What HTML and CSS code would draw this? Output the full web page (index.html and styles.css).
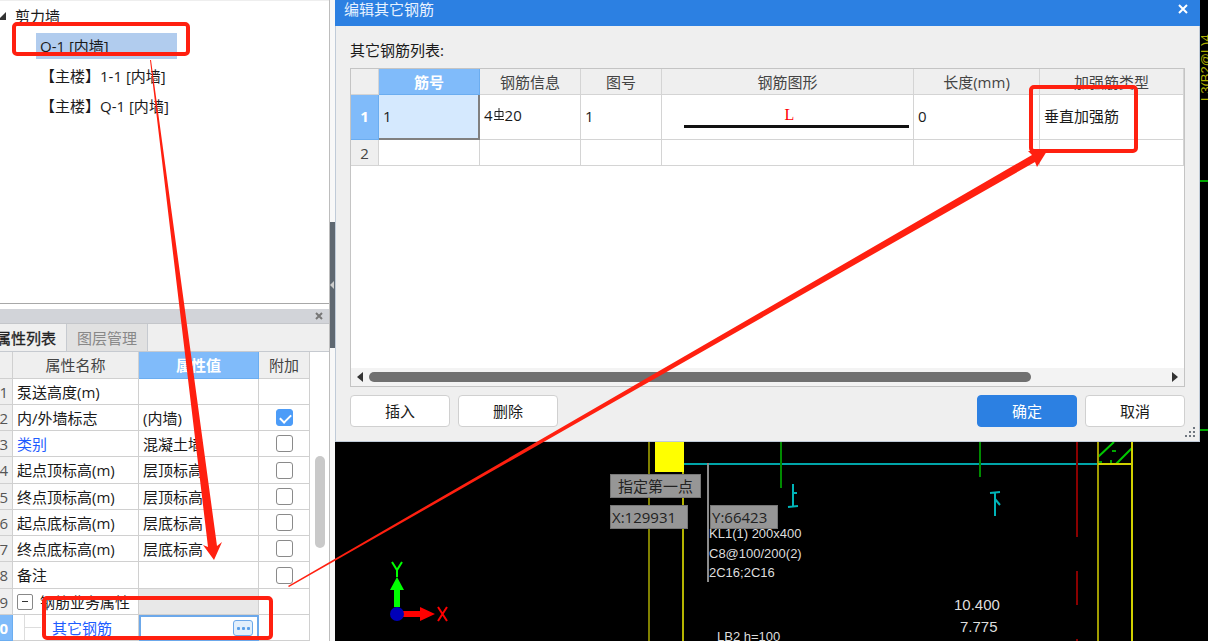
FILE: index.html
```html
<!DOCTYPE html>
<html lang="zh-CN">
<head>
<meta charset="utf-8">
<title>编辑其它钢筋</title>
<link rel="stylesheet" href="styles.css">
</head>
<body>
<div class="app">
  <aside class="side">
    <nav class="tree">
      <div class="tree-root"><svg class="caret" viewBox="0 0 6 8"><path d="M6 0V8H0V6Z"/></svg>剪力墙</div>
      <a class="tree-item selected" href="#q1">Q-1 [内墙]</a>
      <a class="tree-item" href="#z11">【主楼】1-1 [内墙]</a>
      <a class="tree-item" href="#zq1">【主楼】Q-1 [内墙]</a>
    </nav>
    <section class="props">
      <div class="props-bar"><button class="props-close" aria-label="关闭"><svg viewBox="0 0 8 8"><path d="M1 1L7 7M7 1L1 7"/></svg></button></div>
      <div class="tabs"><button class="tab active">属性列表</button><button class="tab">图层管理</button></div>
      <div class="props-body">
        <table class="props-table">
          <colgroup><col class="c-num"><col class="c-name"><col class="c-value"><col class="c-extra"></colgroup>
          <thead><tr><th></th><th>属性名称</th><th class="hot">属性值</th><th>附加</th></tr></thead>
          <tbody>
            <tr><th>1</th><td>泵送高度(m)</td><td></td><td></td></tr>
            <tr><th>2</th><td>内/外墙标志</td><td>(内墙)</td><td class="mid"><input type="checkbox" aria-label="内/外墙标志" checked></td></tr>
            <tr><th>3</th><td class="blue">类别</td><td>混凝土墙</td><td class="mid"><input type="checkbox" aria-label="类别"></td></tr>
            <tr><th>4</th><td>起点顶标高(m)</td><td>层顶标高</td><td class="mid"><input type="checkbox" aria-label="起点顶标高"></td></tr>
            <tr><th>5</th><td>终点顶标高(m)</td><td>层顶标高</td><td class="mid"><input type="checkbox" aria-label="终点顶标高"></td></tr>
            <tr><th>6</th><td>起点底标高(m)</td><td>层底标高</td><td class="mid"><input type="checkbox" aria-label="起点底标高"></td></tr>
            <tr><th>7</th><td>终点底标高(m)</td><td>层底标高</td><td class="mid"><input type="checkbox" aria-label="终点底标高"></td></tr>
            <tr><th>8</th><td>备注</td><td></td><td class="mid"><input type="checkbox" aria-label="备注"></td></tr>
            <tr><th>9</th><td><div class="group"><button class="fold" aria-label="折叠"></button>钢筋业务属性</div></td><td class="grey"></td><td></td></tr>
            <tr><th class="hot">10</th><td class="blue"><div class="child"><svg class="branch" viewBox="0 0 24 25"><path d="M7.500 0V25M7.500 12.500H24"/></svg>其它钢筋</div></td><td class="editing"><button class="more" aria-label="编辑其它钢筋"><i></i><i></i><i></i></button></td><td></td></tr>
          </tbody>
        </table>
        <div class="vscroll"><div class="vthumb"></div></div>
      </div>
    </section>
  </aside>
  <div class="splitter"><div class="handle"><svg viewBox="0 0 5 8"><path d="M4 0V8L0 4Z"/></svg></div></div>
  <main class="canvas">
    <svg class="drawing" viewBox="335 0 873 641" preserveAspectRatio="xMinYMin slice">
      <g fill="none" stroke-width="2">
        <path stroke="#808000" d="M649 441V641"/>
        <path stroke="#b4b400" d="M683 472V641"/>
        <path stroke="#00a4a8" d="M683 464H1098"/>
        <path stroke="#008a00" d="M781 441V488M980 441V477"/>
        <path stroke="#00a800" d="M1200 430H1208M1200 181H1208"/>
        <path stroke="#8a0000" d="M1077 441V537M1077 571V605M1077 639V641"/>
        <path stroke="#8c8c8c" d="M708 463V582"/>
        <path stroke="#00c800" d="M1098 457L1114 442M1116 464L1132 448"/>
        <path stroke="#00a800" d="M1099 462H1102M1112 451H1116M1111 460V463"/>
        <path stroke="#a09c00" d="M1098 441V641"/>
        <path stroke="#d0d000" d="M1132 441V641M1098 464H1132"/>
        <path stroke="#00b4b8" d="M793 484V507M793 493H797M788 507L798 506"/>
        <path stroke="#00b4b8" d="M990 493L1000 492M995 493V516M995 499L1000 505"/>
      </g>
      <path fill="#ff0" d="M655 441H684V472H655Z"/>
      <g class="cad-text">
        <text x="709" y="538">KL1(1) 200x400</text>
        <text x="709" y="558">C8@100/200(2)</text>
        <text x="709" y="577">2C16;2C16</text>
        <text x="717" y="641">LB2 h=100</text>
        <text class="cad-side" transform="rotate(-90 1210 101)" x="1210" y="101">L3(B2@L)4</text>
      </g>
      <g class="cad-level">
        <text x="954" y="610">10.400</text>
        <text x="960" y="632">7.775</text>
        <text x="960" y="651">7.150</text>
      </g>
      <path fill="#0f0" d="M394 607V590H390L397 577L404 590H400V607Z"/>
      <path fill="#f00" d="M403 611H420V607L435 614L420 621V617H403Z"/>
      <circle fill="#0000b8" cx="397" cy="614" r="7"/>
      <path fill="none" stroke="#0f0" stroke-width="2" d="M392 562L397 570L402 562M397 570V577"/>
      <path fill="none" stroke="#f00" stroke-width="2" d="M438 607L447 621M447 607L438 621"/>
    </svg>
    <div class="hint hint-msg">指定第一点</div>
    <div class="hint hint-x">X:129931</div>
    <div class="hint hint-y">Y:66423</div>

    <section class="dialog" role="dialog" aria-labelledby="dlg-title">
      <header class="dlg-head"><span id="dlg-title">编辑其它钢筋</span><button class="dlg-close" aria-label="关闭"><svg viewBox="0 0 10 10"><path d="M1 1L9 9M9 1L1 9"/></svg></button></header>
      <div class="dlg-body">
        <div class="dlg-label">其它钢筋列表:</div>
        <div class="grid-box">
          <table class="bars">
            <colgroup><col class="b-num"><col class="b-id"><col class="b-info"><col class="b-fig"><col><col class="b-len"><col class="b-type"></colgroup>
            <thead><tr><th></th><th class="hot">筋号</th><th>钢筋信息</th><th>图号</th><th>钢筋图形</th><th>长度(mm)</th><th>加强筋类型</th></tr></thead>
            <tbody>
              <tr class="tall"><th class="hot">1</th><td class="current">1</td><td><span class="rebar">4<svg viewBox="0 0 12 14"><path d="M6 0V11M1 11.500H11M2 3.500H10V8.500H2Z"/></svg>20</span></td><td>1</td><td class="shape"><div class="shape-l">L</div></td><td>0</td><td>垂直加强筋</td></tr>
              <tr><th>2</th><td></td><td></td><td></td><td></td><td></td><td></td></tr>
            </tbody>
          </table>
          <div class="hscroll"><svg class="arrow" viewBox="0 0 6 10"><path d="M6 0V10L0 5Z"/></svg><div class="htrack"><div class="hthumb"></div></div><svg class="arrow" viewBox="0 0 6 10"><path d="M0 0V10L6 5Z"/></svg></div>
        </div>
        <footer class="dlg-foot">
          <button class="btn">插入</button><button class="btn">删除</button><span class="space"></span><button class="btn primary">确定</button><button class="btn">取消</button>
        </footer>
      </div>
      <svg class="grip" viewBox="0 0 10 10"><path d="M8 0h2v2h-2zM4 4h2v2h-2zM8 4h2v2h-2zM0 8h2v2h-2zM4 8h2v2h-2zM8 8h2v2h-2z"/></svg>
    </section>
  </main>
  <svg class="marks" aria-hidden="true">
    <g fill="none" stroke="#ff2010" stroke-width="4">
      <rect x="14" y="24" width="174" height="30" rx="3"/>
      <rect x="44" y="598" width="227" height="40" rx="3"/>
      <rect x="1031" y="87" width="105" height="64" rx="3"/>
    </g>
    <g fill="#ff2010">
      <path d="M150 60H151L217 546L222 542L214 560L203 545L208 547Z"/>
      <path d="M288 586L289 587L1035 162L1037 167L1047 151H1028L1032 155Z"/>
    </g>
  </svg>
</div>
</body>
</html>
```
FILE: styles.css
```css
* { box-sizing: border-box; }
body { margin: 0; font: 15px/20px "Open Sans", "Noto Sans CJK SC", sans-serif; color: #1a1a1a; }
button { font: inherit; color: inherit; padding: 0; margin: 0; border: 0; background: none; }
svg { display: block; }
table { border-collapse: separate; border-spacing: 0; table-layout: fixed; }

.app { position: relative; display: grid; grid-template-columns: 330px 5px 1fr; height: 100vh; overflow: hidden; }
.side { display: flex; flex-direction: column; overflow: hidden; background: #fff; border-right: 1px solid #bdbdbd; }

.tree { height: 304px; flex: none; border-bottom: 1px solid #a8a8a8; border-top: 1px solid #eee; }
.tree-root { display: flex; align-items: center; gap: 9px; height: 30px; }
.caret { width: 6px; height: 8px; fill: #333; }
.tree-item { display: flex; align-items: center; width: max-content; height: 26px; margin: 2px 0 4px 36px; padding: 0 4px; color: inherit; text-decoration: none; }
.selected { width: 141px; background: #b1ccee; }

.props { flex: 1; display: flex; flex-direction: column; min-height: 0; padding-top: 5px; }
.props-bar { display: flex; flex: none; justify-content: flex-end; align-items: center; height: 15px; padding-right: 6px; background: #d2d4d9; border-bottom: 1px solid #c4c6ca; }
.props-close svg { width: 8px; height: 8px; stroke: #777; stroke-width: 2; }
.tabs { display: flex; flex: none; height: 28px; margin-left: -14px; background: #efefef; border-bottom: 1px solid #c6cad0; }
.tab { width: 81px; border-right: 1px solid #c6cad0; background: #e1e1e1; color: #888; }
.tab.active { background: #efefef; color: #222; -webkit-text-stroke: 0.3px #222; }
.props-body { display: flex; flex: 1; margin-left: -18px; }
.props-table { width: 328px; height: max-content; }
.c-num { width: 31px; }
.c-name { width: 126px; }
.c-value { width: 120px; }
.props-table th, .props-table td { height: 26px; padding: 0 4px; border: solid #d0d0d0; border-width: 0 1px 1px 0; font-weight: 400; white-space: nowrap; }
.props-table tbody tr:nth-child(4n) > * { height: 27px; }
.props-table th { background: #efefef; color: #444; }
.props-table thead th { height: 27px; text-align: center; }
.props-table tbody th { text-align: right; color: #555; }
.props-table tbody th.hot, .props-table thead th.hot, .bars .hot { background: #80bbfa; color: #fff; font-weight: 700; border-color: #6badf0; }
.props-table .blue { color: #1e5cff; }
.props-table .mid { text-align: center; }
.props-table .grey { background: #e8e8e8; }
.props-table .editing { border: 2px solid #6ca8ea; padding: 0 4px; }
input[type="checkbox"] { appearance: none; display: block; width: 17px; height: 17px; margin: 0 auto; border: 1px solid #8a8a8a; border-radius: 3px; background: #fff; }
input[type="checkbox"]:checked { border-color: #4c9cf8; background: #4c9cf8; }
input[type="checkbox"]:checked::before { content: ""; display: block; width: 9px; height: 5px; margin: 4px 3px; border: solid #fff; border-width: 0 0 2px 2px; transform: rotate(-45deg); }
.group { display: flex; align-items: center; gap: 7px; }
.fold { display: grid; place-items: center; width: 16px; height: 16px; border: 1px solid #888; border-radius: 2px; }
.fold::before { content: ""; width: 6px; height: 1px; background: #333; }
.child { display: flex; align-items: center; gap: 11px; }
.branch { width: 24px; height: 25px; fill: none; stroke: #ddd; }
.more { display: flex; justify-content: center; align-items: center; gap: 2px; width: 20px; height: 16px; margin-left: auto; border: 1px solid #6ca8ea; border-radius: 3px; background: #e2effc; }
.more i { width: 3px; height: 3px; background: #5a9fe8; border-radius: 1px; }
.vscroll { flex: 1; display: flex; justify-content: center; padding-top: 104px; }
.vthumb { width: 10px; height: 92px; border-radius: 5px; background: #c9c9c9; }

.splitter { background: #f8f8f8; padding-top: 222px; }
.handle { display: grid; place-items: center end; height: 126px; background: #5f6871; }
.handle svg { width: 5px; height: 8px; fill: #ccc; }

.canvas { position: relative; min-width: 0; background: #000; overflow: hidden; }
.drawing { width: 100%; height: 100%; }
.cad-text { font: 13px "Liberation Sans Narrow", "Liberation Sans", sans-serif; fill: #ddd; }
.cad-side { fill: #b0b000; }
.cad-level { font: 15px "Liberation Sans Narrow", "Liberation Sans", sans-serif; fill: #ddd; }
.hint { position: absolute; height: 24px; padding: 0 2px; border: 1px solid #777; background: #969696; color: #222; line-height: 22px; white-space: nowrap; }
.hint-msg { left: 275px; top: 474px; width: 91px; text-align: center; }
.hint-x { left: 275px; top: 505px; width: 78px; padding: 0 1px; }
.hint-y { left: 375px; top: 505px; width: 68px; padding: 0 1px; }

.dialog { position: absolute; top: 0; left: 0; right: 8px; background: #efefef; border: solid #c0cbd8; border-width: 0 1px 1px; }
.dlg-head { display: flex; justify-content: space-between; height: 26px; padding: 0 12px 8px 9px; margin: 0 -1px; background: #2c80e2; color: #e8f2ff; line-height: 18px; }
.dlg-close svg { width: 10px; height: 10px; fill: none; stroke: #fff; stroke-width: 2; }
.dlg-body { padding: 14px 14px; }
.dlg-label { margin-bottom: 8px; }
.grid-box { display: flex; flex-direction: column; height: 319px; background: #fff; border: 1px solid #c4c4c4; }
.bars { width: 100%; }
.b-num { width: 28px; }
.b-id, .b-info { width: 101px; }
.b-fig { width: 81px; }
.b-len { width: 126px; }
.b-type { width: 144px; }
.bars th, .bars td { height: 26px; padding: 0 4px; border: solid #d4d4d4; border-width: 0 1px 1px 0; text-align: left; font-weight: 400; }
.bars th { text-align: center; background: #efefef; color: #444; padding: 0; }
.bars .tall > * { height: 45px; padding-bottom: 2px; }
.bars .current { background: #d5e9fe; border: solid #808080; border-width: 0 2px 2px 0; }
.rebar { display: flex; align-items: center; padding-bottom: 2px; }
.rebar svg { width: 12px; height: 14px; fill: none; stroke: #222; }
.bars .shape { padding: 0 4px 0 22px; }
.shape-l { height: 22px; padding-right: 14px; border-bottom: 3px solid #111; color: #f00; font: 16px/18px "Liberation Serif", serif; text-align: center; }
.hscroll { display: flex; align-items: center; gap: 6px; height: 18px; margin-top: auto; padding: 0 6px; background: #f3f3f3; }
.arrow { width: 6px; height: 10px; fill: #333; }
.htrack { flex: 1; }
.hthumb { width: 83%; height: 10px; border-radius: 5px; background: #707070; }
.dlg-foot { display: flex; gap: 8px; padding-top: 8px; }
.space { flex: 1; }
.btn { width: 100px; height: 32px; border: 1px solid #d0d0d0; border-radius: 4px; background: #fff; }
.primary { border-color: #2c80e2; background: #2c80e2; color: #fff; }
.grip { position: absolute; right: 4px; bottom: 4px; width: 10px; height: 10px; fill: #707780; }

.marks { position: absolute; inset: 0; width: 100%; height: 100%; pointer-events: none; }
```
